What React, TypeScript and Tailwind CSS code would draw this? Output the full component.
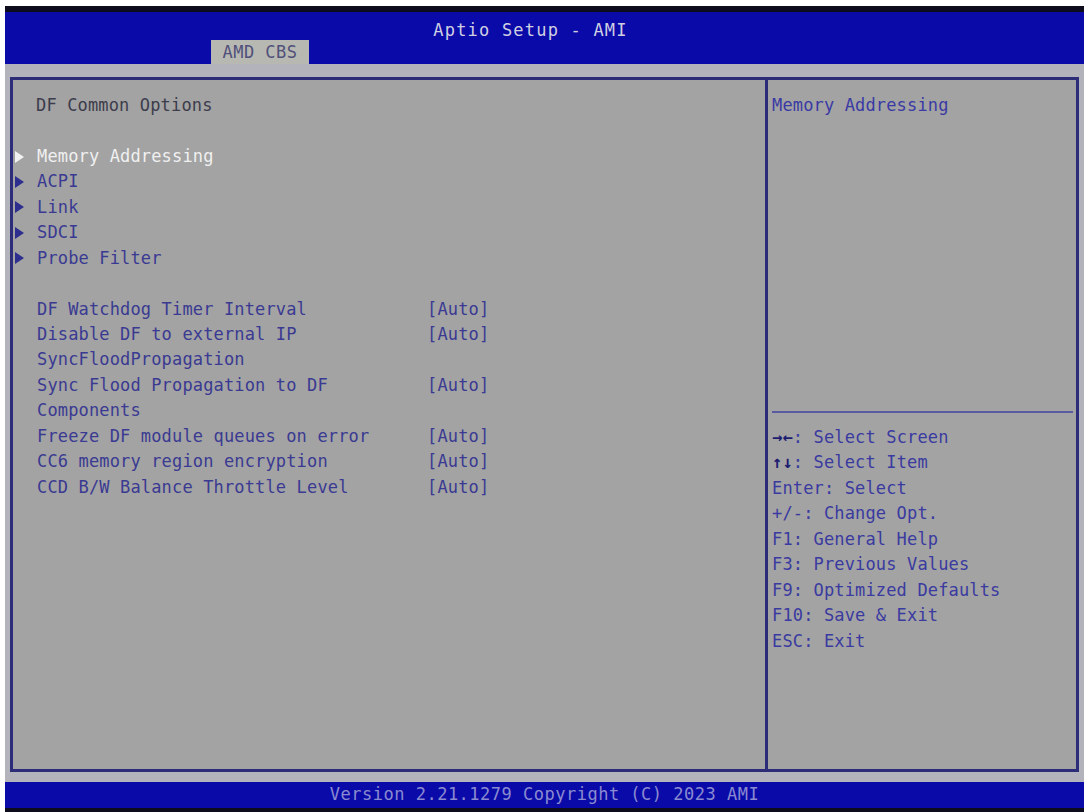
import React from "react";

const mono = { fontFamily: '"DejaVu Sans Mono", "Liberation Mono", monospace' };

function Tri({ white }: { white?: boolean }) {
  return (
    <svg width="9" height="12" viewBox="0 0 9 12" className="shrink-0">
      <polygon points="0,0 9,6 0,12" fill={white ? "#f2f2f2" : "#2e2e8e"} />
    </svg>
  );
}

const menuItems = ["Memory Addressing", "ACPI", "Link", "SDCI", "Probe Filter"];

const settings: { label: string[]; value: string }[] = [
  { label: ["DF Watchdog Timer Interval"], value: "[Auto]" },
  { label: ["Disable DF to external IP", "SyncFloodPropagation"], value: "[Auto]" },
  { label: ["Sync Flood Propagation to DF", "Components"], value: "[Auto]" },
  { label: ["Freeze DF module queues on error"], value: "[Auto]" },
  { label: ["CC6 memory region encryption"], value: "[Auto]" },
  { label: ["CCD B/W Balance Throttle Level"], value: "[Auto]" },
];

const help = [
  { k: "→←", r: ": Select Screen" },
  { k: "↑↓", r: ": Select Item" },
  { k: "", r: "Enter: Select" },
  { k: "", r: "+/-: Change Opt." },
  { k: "", r: "F1: General Help" },
  { k: "", r: "F3: Previous Values" },
  { k: "", r: "F9: Optimized Defaults" },
  { k: "", r: "F10: Save & Exit" },
  { k: "", r: "ESC: Exit" },
];

export default function App() {
  return (
    <div
      className="w-[1084px] h-[812px] bg-white pl-[5px] pt-[6px] overflow-hidden text-[17px] tracking-[0.15px]"
      style={mono}
    >
      <div className="flex flex-col h-full">
        <div className="h-[6px] bg-[#0c0c1c]" />
        <div className="h-[52px] bg-[#0a0aa8] flex flex-col">
          <div className="h-[28px] flex items-center justify-center pr-[28px] pt-[9px] text-[#cfcfe2] tracking-[1.2px]">
            Aptio Setup - AMI
          </div>
          <div className="flex-1 flex items-end pl-[206px]">
            <div className="w-[98px] h-[24px] bg-[#b8b8b2] flex items-center justify-center pt-[2px] text-[#50507a] tracking-[0.5px]">
              AMD CBS
            </div>
          </div>
        </div>
        <div className="flex-1 bg-[#b3b3bb] pt-[13px] pb-[10px] pl-[5px] pr-[5px] flex flex-col">
          <div className="flex-1 flex border-[3px] border-[#2c2c78] bg-[#a3a3a3]">
            <div className="w-[752px] shrink-0 pt-[13px] leading-[25.45px]">
              <div className="pl-[23px] text-[#3c3c4c]">DF Common Options</div>
              <div className="h-[25.45px]" />
              {menuItems.map((m, i) => (
                <div key={m} className="flex items-center h-[25.45px] pl-[2px]">
                  <Tri white={i === 0} />
                  <span className={"pl-[13px] " + (i === 0 ? "text-[#f0f0f0]" : "text-[#3a3a92]")}>
                    {m}
                  </span>
                </div>
              ))}
              <div className="h-[25.45px]" />
              {settings.map((s) => (
                <div key={s.label.join(" ")} className="flex pl-[24px] text-[#3a3a92]">
                  <div className="w-[390px] shrink-0">
                    {s.label.map((l) => (
                      <div key={l} className="h-[25.45px] whitespace-pre">
                        {l}
                      </div>
                    ))}
                  </div>
                  <div className="h-[25.45px]">{s.value}</div>
                </div>
              ))}
            </div>
            <div className="w-[3px] bg-[#2c2c78] shrink-0" />
            <div className="flex-1 flex flex-col leading-[25.45px]">
              <div className="h-[331px] pt-[13px] pl-[4px] text-[#3a3aa4]">Memory Addressing</div>
              <div className="h-[2px] bg-[#5a5aa0] ml-[4px] mr-[3px]" />
              <div className="pt-[12px] pl-[4px] text-[#3a3aa0]">
                {help.map((h) => (
                  <div key={h.r} className="h-[25.45px] whitespace-pre">
                    {h.k && <span className="text-[#1c1c70] font-bold">{h.k}</span>}
                    {h.r}
                  </div>
                ))}
              </div>
            </div>
          </div>
        </div>
        <div className="h-[26px] bg-[#0a0aa8] flex items-center justify-center text-[#8a8ad0] tracking-[0.5px]">
          Version 2.21.1279 Copyright (C) 2023 AMI
        </div>
        <div className="h-[4px] bg-[#0c0c1c]" />
      </div>
    </div>
  );
}
